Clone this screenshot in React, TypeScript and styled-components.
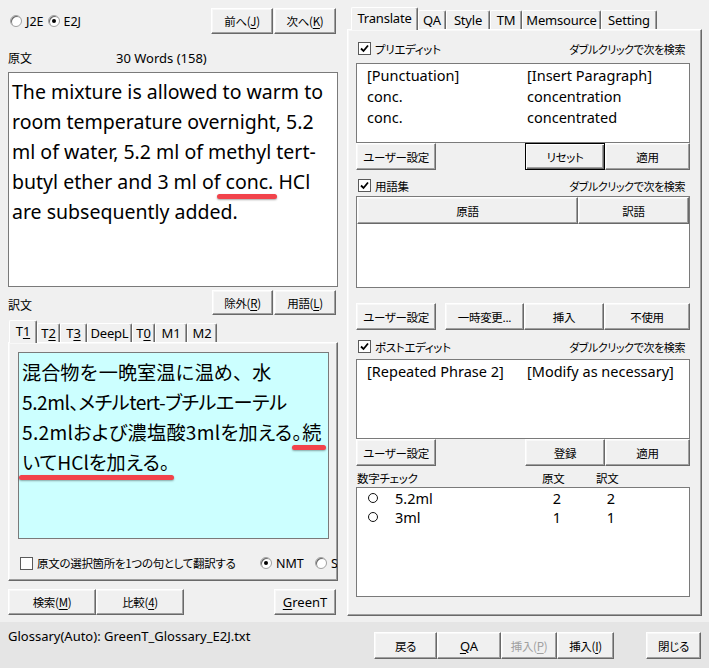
import React from "react";
import styled, { createGlobalStyle, css } from "styled-components";

const JP = `"Noto Sans CJK JP", "Noto Sans", sans-serif`;
const LATIN = `"Noto Sans", "Noto Sans CJK JP", sans-serif`;

const GlobalStyle = createGlobalStyle`
  html, body {
    margin: 0;
    padding: 0;
    background: #f0f0f0;
  }
  body {
    font-family: ${LATIN};
    font-size: 12px;
    color: #000;
  }
  * {
    box-sizing: border-box;
  }
`;

const raised = css`
  border: 1px solid;
  border-color: #fff #696969 #696969 #fff;
  box-shadow: inset -1px -1px #a0a0a0, inset 1px 1px #f8f8f8;
`;

const uiJp = css`
  font-family: ${JP};
  font-feature-settings: "palt";
  font-size: 11.5px;
  letter-spacing: -0.3px;
`;

const Window = styled.div`
  width: 709px;
  height: 668px;
  display: flex;
  flex-direction: column;
  overflow: hidden;
  background: #f0f0f0;
`;

const Main = styled.div`
  height: 622px;
  display: flex;
`;

const LeftPane = styled.div`
  width: 345px;
  padding: 8px 7px 0 8px;
  display: flex;
  flex-direction: column;
`;

const RightPane = styled.div`
  width: 364px;
  padding: 7px 7px 0 2px;
  display: flex;
  flex-direction: column;
`;

const Button = styled.button<{ $w: number; $h?: number; $focused?: boolean; $disabled?: boolean; $latin?: boolean }>`
  width: ${(p) => p.$w}px;
  height: ${(p) => p.$h ?? 26}px;
  flex: none;
  padding: 0;
  background: #f0f0f0;
  ${raised};
  ${(p) =>
    p.$latin
      ? css`
          font-family: ${LATIN};
          font-size: 13px;
        `
      : uiJp};
  color: ${(p) => (p.$disabled ? "#a0a0a0" : "#000")};
  ${(p) =>
    p.$focused &&
    css`
      border: 1px solid #000;
      box-shadow: inset 1px 1px #fff, inset -1px -1px #696969, inset -2px -2px #a0a0a0;
    `}
  u {
    text-underline-offset: 2px;
  }
`;

const ButtonGroup = styled.div<{ $gap?: number; $top?: number }>`
  display: flex;
  gap: ${(p) => p.$gap ?? 0}px;
  margin-top: ${(p) => p.$top ?? 0}px;
`;

/* --- left side --- */

const TopRow = styled.div`
  height: 26px;
  display: flex;
  align-items: center;
  justify-content: space-between;
  padding: 0 2px 0 2px;
`;

const RadioGroup = styled.div`
  display: flex;
  align-items: center;
  gap: 4px;
`;

const RadioLabel = styled.label<{ $w?: number }>`
  display: flex;
  align-items: center;
  gap: 4px;
  width: ${(p) => (p.$w ? `${p.$w}px` : "auto")};
  flex: none;
  font-family: ${LATIN};
  font-size: 12.5px;
`;

const RadioCircle = styled.span<{ $on?: boolean }>`
  width: 12px;
  height: 12px;
  border-radius: 50%;
  background: #fff;
  border: 1px solid #a0a0a0;
  box-shadow: inset 1px 1px #696969;
  display: inline-flex;
  align-items: center;
  justify-content: center;
  flex: none;
  &::after {
    content: "";
    width: 4px;
    height: 4px;
    border-radius: 50%;
    background: ${(p) => (p.$on ? "#000" : "transparent")};
  }
`;

const LabelRow = styled.div`
  margin-top: 16px;
  height: 15px;
  display: flex;
  align-items: center;
`;

const FieldLabel = styled.span<{ $w?: number }>`
  width: ${(p) => (p.$w ? `${p.$w}px` : "auto")};
  font-family: ${JP};
  font-size: 12px;
`;

const WordCount = styled.span`
  font-family: ${LATIN};
  font-size: 13px;
`;

const SourceBox = styled.div`
  margin-top: 7px;
  height: 215px;
  background: #fff;
  border: 1px solid #7a7a7a;
  padding: 4px 3px;
  font-family: ${LATIN};
  font-size: 19.5px;
  line-height: 30px;
  white-space: nowrap;
`;

const Marked = styled.span<{ $l: number; $r: number }>`
  position: relative;
  &::after {
    content: "";
    position: absolute;
    left: ${(p) => p.$l}px;
    right: ${(p) => p.$r}px;
    bottom: -4px;
    height: 5px;
    border-radius: 3px;
    background: #f2434b;
    box-shadow: 0 1px 2px rgba(0, 0, 0, 0.35);
  }
`;

const TargetRow = styled.div`
  margin-top: 3px;
  height: 25px;
  display: flex;
  align-items: flex-end;
  justify-content: space-between;
  padding-right: 2px;
  span {
    padding-bottom: 2px;
  }
`;

const TabStrip = styled.div<{ $top?: number; $left: number }>`
  margin-top: ${(p) => p.$top ?? 0}px;
  height: 22px;
  display: flex;
  align-items: flex-end;
  padding-left: ${(p) => p.$left}px;
  position: relative;
  z-index: 1;
`;

const Tab = styled.div<{ $w: number; $active?: boolean }>`
  width: ${(p) => p.$w}px;
  height: ${(p) => (p.$active ? 23 : 19)}px;
  margin-bottom: ${(p) => (p.$active ? -1 : 0)}px;
  flex: none;
  display: flex;
  align-items: center;
  justify-content: center;
  padding-bottom: ${(p) => (p.$active ? 2 : 0)}px;
  background: #f0f0f0;
  border-top: 1px solid #fff;
  border-left: 1px solid #fff;
  border-right: 1px solid #696969;
  box-shadow: inset -1px 0 #a0a0a0;
  border-radius: 2px 2px 0 0;
  font-family: ${LATIN};
  font-size: 13px;
  letter-spacing: -0.2px;
  u {
    text-underline-offset: 2px;
  }
`;

const TabPanel = styled.div<{ $h: number; $pad: string }>`
  height: ${(p) => p.$h}px;
  padding: ${(p) => p.$pad};
  ${raised};
  display: flex;
  flex-direction: column;
  overflow: hidden;
`;

const TargetBox = styled.div`
  height: 187px;
  background: #ccffff;
  border: 1px solid #7a7a7a;
  padding: 4px 3px;
  font-family: ${JP};
  font-size: 19.2px;
  line-height: 30px;
  white-space: nowrap;
`;

const TargetLine = styled.span<{ $palt?: boolean; $ls?: number }>`
  font-feature-settings: ${(p) => (p.$palt ? '"palt"' : "normal")};
  letter-spacing: ${(p) => p.$ls ?? 0}px;
`;

const OptionRow = styled.div`
  margin-top: 14px;
  height: 20px;
  display: flex;
  align-items: center;
  padding-left: 2px;
  white-space: nowrap;
`;

const CheckLabel = styled.label<{ $w?: number }>`
  display: flex;
  align-items: center;
  gap: 4px;
  width: ${(p) => (p.$w ? `${p.$w}px` : "auto")};
  flex: none;
  ${uiJp};
`;

const CheckBox = styled.span`
  width: 13px;
  height: 13px;
  flex: none;
  background: #fff;
  border: 1px solid #5a5a5a;
  display: inline-flex;
  align-items: center;
  justify-content: center;
`;

const BottomButtons = styled.div`
  margin-top: 8px;
  display: flex;
`;

/* --- right side --- */

const HintRow = styled.div<{ $top: number }>`
  margin-top: ${(p) => p.$top}px;
  height: 15px;
  display: flex;
  align-items: center;
  justify-content: space-between;
  padding: 0 5px 0 2px;
`;

const Hint = styled.span`
  ${uiJp};
  font-size: 11px;
  letter-spacing: -0.4px;
`;

const ListBox = styled.div<{ $h: number; $top?: number }>`
  margin-top: ${(p) => p.$top ?? 0}px;
  height: ${(p) => p.$h}px;
  flex: none;
  background: #fff;
  border: 1px solid #7a7a7a;
  font-family: ${LATIN};
  font-size: 14.5px;
`;

const ListRow = styled.div`
  height: 21px;
  display: grid;
  grid-template-columns: 160px 1fr;
  align-items: center;
  padding-left: 10px;
  white-space: nowrap;
`;

const ActionRow = styled.div<{ $top?: number }>`
  margin-top: ${(p) => p.$top ?? 0}px;
  display: flex;
  align-items: center;
  justify-content: space-between;
`;

const ListView = styled.div`
  margin-top: 3px;
  height: 92px;
  background: #fff;
  border: 1px solid #7a7a7a;
  display: flex;
  flex-direction: column;
`;

const HeaderRow = styled.div`
  display: flex;
  height: 27px;
`;

const HeaderCell = styled.div<{ $w?: number }>`
  ${(p) => (p.$w ? `width: ${p.$w}px;` : "flex: 1;")}
  background: #f0f0f0;
  ${raised};
  display: flex;
  align-items: center;
  justify-content: center;
  ${uiJp};
`;

const NumHeader = styled.div`
  margin-top: 4px;
  height: 16px;
  display: grid;
  grid-template-columns: 185px 54px 1fr;
  align-items: center;
  padding-left: 1px;
  ${uiJp};
`;

const NumRow = styled.div`
  height: 19px;
  display: grid;
  grid-template-columns: 27px 135px 54px 54px;
  align-items: center;
  padding-left: 11px;
  span:nth-child(n + 3) {
    text-align: center;
  }
`;

const Ring = styled.span`
  width: 10px;
  height: 10px;
  border: 1px solid #111;
  border-radius: 50%;
`;

/* --- status strip --- */

const StatusStrip = styled.div`
  height: 46px;
  background: #e5e5e5;
  display: flex;
  align-items: flex-start;
`;

const StatusText = styled.div`
  width: 374px;
  padding: 6px 0 0 8px;
  line-height: 16px;
  font-family: ${LATIN};
  font-size: 13px;
`;

const Spacer = styled.div<{ $w: number }>`
  width: ${(p) => p.$w}px;
  flex: none;
`;

const Check = () => (
  <CheckBox>
    <svg width="9" height="9" viewBox="0 0 9 9">
      <path d="M1 4.5 L3.5 7 L8 1.5" fill="none" stroke="#000" strokeWidth="1.8" />
    </svg>
  </CheckBox>
);

const leftTabs: { label: React.ReactNode; w: number; active?: boolean }[] = [
  { label: <>T<u>1</u></>, w: 28, active: true },
  { label: <>T<u>2</u></>, w: 23 },
  { label: <>T<u>3</u></>, w: 27 },
  { label: "DeepL", w: 45 },
  { label: <>T<u>0</u></>, w: 23 },
  { label: "M1", w: 32 },
  { label: "M2", w: 30 },
];

const rightTabs = [
  { label: "Translate", w: 67, active: true },
  { label: "QA", w: 28 },
  { label: "Style", w: 44 },
  { label: "TM", w: 32 },
  { label: "Memsource", w: 79 },
  { label: "Setting", w: 56 },
];

const preEdits = [
  ["[Punctuation]", "[Insert Paragraph]"],
  ["conc.", "concentration"],
  ["conc.", "concentrated"],
];

const numbers = [
  ["5.2ml", "2", "2"],
  ["3ml", "1", "1"],
];

export default function App() {
  return (
    <>
      <GlobalStyle />
      <Window>
        <Main>
          <LeftPane>
            <TopRow>
              <RadioGroup>
                <RadioLabel>
                  <RadioCircle />
                  J2E
                </RadioLabel>
                <RadioLabel>
                  <RadioCircle $on />
                  E2J
                </RadioLabel>
              </RadioGroup>
              <ButtonGroup $gap={1}>
                <Button $w={62}>前へ(<u>J</u>)</Button>
                <Button $w={62}>次へ(<u>K</u>)</Button>
              </ButtonGroup>
            </TopRow>

            <LabelRow>
              <FieldLabel $w={108}>原文</FieldLabel>
              <WordCount>30 Words (158)</WordCount>
            </LabelRow>

            <SourceBox>
              The mixture is allowed to warm to
              <br />
              room temperature overnight, 5.2
              <br />
              ml of water, 5.2 ml of methyl tert-
              <br />
              butyl ether and 3 ml of <Marked $l={-9} $r={-4}>conc.</Marked> HCl
              <br />
              are subsequently added.
            </SourceBox>

            <TargetRow>
              <FieldLabel>訳文</FieldLabel>
              <ButtonGroup $gap={1}>
                <Button $w={61} $h={25}>除外(<u>R</u>)</Button>
                <Button $w={62} $h={25}>用語(<u>L</u>)</Button>
              </ButtonGroup>
            </TargetRow>

            <TabStrip $top={5} $left={1}>
              {leftTabs.map((t, i) => (
                <Tab key={i} $w={t.w} $active={t.active}>
                  {t.label}
                </Tab>
              ))}
            </TabStrip>
            <TabPanel $h={239} $pad="9px 8px 0 9px">
              <TargetBox>
                <TargetLine>混合物を一晩室温に温め、水</TargetLine>
                <br />
                <TargetLine $palt $ls={-0.5}>
                  5.2ml、メチルtert-ブチルエーテル
                </TargetLine>
                <br />
                <TargetLine $palt $ls={0.25}>
                  5.2mlおよび濃塩酸3mlを加える。<Marked $l={-10} $r={-4}>続</Marked>
                </TargetLine>
                <br />
                <TargetLine $palt>
                  <Marked $l={-3} $r={-5}>いてHClを加える。</Marked>
                </TargetLine>
              </TargetBox>
              <OptionRow>
                <CheckLabel $w={240}>
                  <CheckBox />
                  原文の選択箇所を1つの句として翻訳する
                </CheckLabel>
                <RadioLabel $w={55}>
                  <RadioCircle $on />
                  NMT
                </RadioLabel>
                <RadioLabel>
                  <RadioCircle />
                  S
                </RadioLabel>
              </OptionRow>
            </TabPanel>

            <BottomButtons>
              <Button $w={88}>検索(<u>M</u>)</Button>
              <Button $w={88}>比較(<u>4</u>)</Button>
              <Spacer $w={90} />
              <Button $w={62} $latin>
                <u>G</u>reenT
              </Button>
            </BottomButtons>
          </LeftPane>

          <RightPane>
            <TabStrip $left={4}>
              {rightTabs.map((t) => (
                <Tab key={t.label} $w={t.w} $active={t.active}>
                  {t.label}
                </Tab>
              ))}
            </TabStrip>
            <TabPanel $h={587} $pad="11px 11px 0 8px">
              <HintRow $top={0}>
                <CheckLabel>
                  <Check />
                  プリエディット
                </CheckLabel>
                <Hint>ダブルクリックで次を検索</Hint>
              </HintRow>
              <ListBox $h={80} $top={7}>
                {preEdits.map(([a, b], i) => (
                  <ListRow key={i}>
                    <span>{a}</span>
                    <span>{b}</span>
                  </ListRow>
                ))}
              </ListBox>
              <ActionRow>
                <Button $w={80} $h={27}>ユーザー設定</Button>
                <ButtonGroup>
                  <Button $w={80} $h={27} $focused>リセット</Button>
                  <Button $w={85} $h={27}>適用</Button>
                </ButtonGroup>
              </ActionRow>

              <HintRow $top={8}>
                <CheckLabel>
                  <Check />
                  用語集
                </CheckLabel>
                <Hint>ダブルクリックで次を検索</Hint>
              </HintRow>
              <ListView>
                <HeaderRow>
                  <HeaderCell>原語</HeaderCell>
                  <HeaderCell $w={111}>訳語</HeaderCell>
                </HeaderRow>
              </ListView>
              <ActionRow $top={15}>
                <Button $w={80} $h={27}>ユーザー設定</Button>
                <ButtonGroup>
                  <Button $w={79} $h={27}>一時変更...</Button>
                  <Button $w={80} $h={27}>挿入</Button>
                  <Button $w={86} $h={27}>不使用</Button>
                </ButtonGroup>
              </ActionRow>

              <HintRow $top={9}>
                <CheckLabel>
                  <Check />
                  ポストエディット
                </CheckLabel>
                <Hint>ダブルクリックで次を検索</Hint>
              </HintRow>
              <ListBox $h={80} $top={5}>
                <ListRow>
                  <span>[Repeated Phrase 2]</span>
                  <span>[Modify as necessary]</span>
                </ListRow>
              </ListBox>
              <ActionRow>
                <Button $w={80} $h={27}>ユーザー設定</Button>
                <ButtonGroup>
                  <Button $w={80} $h={27}>登録</Button>
                  <Button $w={85} $h={27}>適用</Button>
                </ButtonGroup>
              </ActionRow>

              <NumHeader>
                <span>数字チェック</span>
                <span>原文</span>
                <span>訳文</span>
              </NumHeader>
              <ListBox $h={110} $top={1}>
                {numbers.map(([n, s, t]) => (
                  <NumRow key={n}>
                    <Ring />
                    <span>{n}</span>
                    <span>{s}</span>
                    <span>{t}</span>
                  </NumRow>
                ))}
              </ListBox>
            </TabPanel>
          </RightPane>
        </Main>

        <StatusStrip>
          <StatusText>Glossary(Auto): GreenT_Glossary_E2J.txt</StatusText>
          <ButtonGroup $top={10}>
            <Button $w={63} $h={27}>戻る</Button>
            <Button $w={64} $h={27} $latin>
              <u>Q</u>A
            </Button>
            <Button $w={56} $h={27} $disabled>
              挿入(<u>P</u>)
            </Button>
            <Button $w={57} $h={27}>
              挿入(<u>I</u>)
            </Button>
            <Spacer $w={32} />
            <Button $w={55} $h={27}>閉じる</Button>
          </ButtonGroup>
        </StatusStrip>
      </Window>
    </>
  );
}
